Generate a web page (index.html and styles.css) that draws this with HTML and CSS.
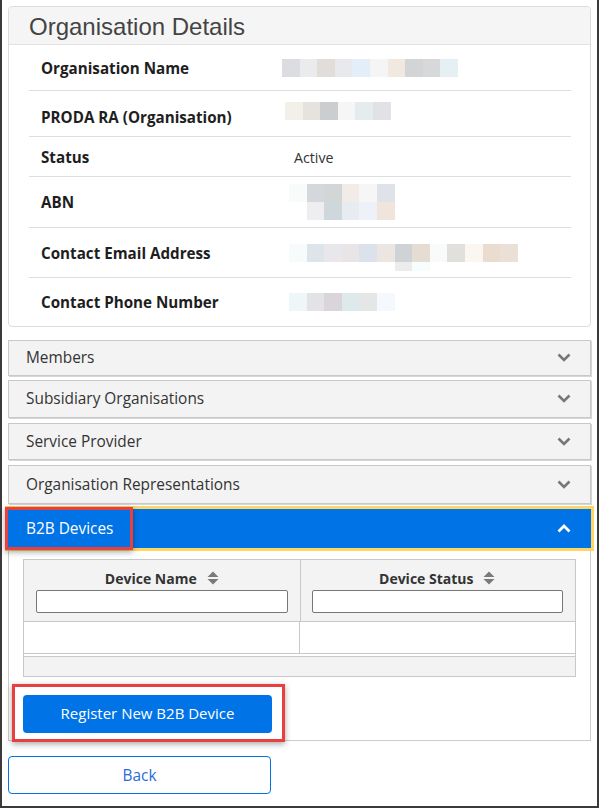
FILE: index.html
```html
<!DOCTYPE html>
<html>
<head>
<meta charset="utf-8">
<link rel="stylesheet" href="styles.css">
</head>
<body>
<div class="frame">
  <section class="card">
    <div class="card-head"><h1>Organisation Details</h1></div>
    <div class="rows">
      <div class="row r1">
        <div class="label">Organisation Name</div>
        <div class="value"><div class="blur">
          <div class="line"><i style="background:#dcdde1"></i><i style="background:#eaebed"></i><i style="background:#e1ddd9"></i><i style="background:#e8e9ed"></i><i style="background:#e4eef8"></i><i style="background:#f5f5f5"></i><i style="background:#f1e8df"></i><i style="background:#d3d4d6"></i><i style="background:#d7d8d9"></i><i style="background:#e5f0f5"></i></div>
        </div></div>
      </div>
      <div class="row r2">
        <div class="label low">PRODA RA (Organisation)</div>
        <div class="value"><div class="blur off3 up">
          <div class="line"><i style="background:#f3f0ea"></i><i style="background:#e6e3de"></i><i style="background:#cccdce"></i><i style="background:#f6f6f6"></i><i style="background:#e5eced"></i><i style="background:#e1e2e5"></i></div>
        </div></div>
      </div>
      <div class="row r3">
        <div class="label">Status</div>
        <div class="value"><span class="text">Active</span></div>
      </div>
      <div class="row r4">
        <div class="label">ABN</div>
        <div class="value"><div class="blur off7">
          <div class="line"><i style="background:#f9fbfa"></i><i style="background:#d4d8dd"></i><i style="background:#d2d6d6"></i><i style="background:#f2ece8"></i><i style="background:#f5f6f5"></i><i style="background:#dfe3e9"></i></div>
          <div class="line"><i style="background:transparent"></i><i style="background:#eeeef0"></i><i style="background:#ced8dc"></i><i style="background:#e7ecf0"></i><i style="background:#eef2f8"></i><i style="background:#efe5dc"></i></div>
        </div></div>
      </div>
      <div class="row r5">
        <div class="label">Contact Email Address</div>
        <div class="value"><div class="blur off7 down">
          <div class="line"><i style="background:#f7fbfb"></i><i style="background:#dde4ea"></i><i style="background:#e8e7ec"></i><i style="background:#e9e5e7"></i><i style="background:#dbe2eb"></i><i style="background:#ebe6e1"></i><i style="background:#cfd3d6"></i><i style="background:#e6ddd2"></i><i style="background:#f8fbfa"></i><i style="background:#e1e0dd"></i><i style="background:#fbf6f0"></i><i style="background:#ebdcd0"></i><i style="background:#eae0d6"></i></div>
          <div class="line half"><i style="background:transparent"></i><i style="background:transparent"></i><i style="background:transparent"></i><i style="background:transparent"></i><i style="background:transparent"></i><i style="background:transparent"></i><i style="background:#ececec"></i><i style="background:#f7fcfd"></i></div>
        </div></div>
      </div>
      <div class="row r6">
        <div class="label">Contact Phone Number</div>
        <div class="value"><div class="blur off7">
          <div class="line"><i style="background:#eef6f9"></i><i style="background:#e3e3e5"></i><i style="background:#d9d5da"></i><i style="background:#dde9ea"></i><i style="background:#e5e7e6"></i><i style="background:#f5f9fd"></i></div>
        </div></div>
      </div>
    </div>
  </section>

  <div class="acc a1"><span>Members</span><svg class="chev" width="14" height="9" viewBox="0 0 14 9"><polyline points="1.5,1.5 7,7 12.5,1.5" fill="none" stroke="#777" stroke-width="2.6"/></svg></div>
  <div class="acc a2"><span>Subsidiary Organisations</span><svg class="chev" width="14" height="9" viewBox="0 0 14 9"><polyline points="1.5,1.5 7,7 12.5,1.5" fill="none" stroke="#777" stroke-width="2.6"/></svg></div>
  <div class="acc a3"><span>Service Provider</span><svg class="chev" width="14" height="9" viewBox="0 0 14 9"><polyline points="1.5,1.5 7,7 12.5,1.5" fill="none" stroke="#777" stroke-width="2.6"/></svg></div>
  <div class="acc a4"><span>Organisation Representations</span><svg class="chev" width="14" height="9" viewBox="0 0 14 9"><polyline points="1.5,1.5 7,7 12.5,1.5" fill="none" stroke="#777" stroke-width="2.6"/></svg></div>
  <div class="acc open"><span>B2B Devices</span><svg class="chev" width="14" height="9" viewBox="0 0 14 9"><polyline points="1.5,7.5 7,2 12.5,7.5" fill="none" stroke="#fff" stroke-width="2.8"/></svg><div class="mark mark-head"></div></div>

  <div class="panel">
    <div class="table">
      <div class="thead">
        <div class="th"><div class="th-title">Device Name <svg class="sort" width="12" height="15" viewBox="0 0 12 15"><polygon points="6,0.5 11.5,6 0.5,6" fill="#7a7a7a"/><polygon points="0.5,8 11.5,8 6,13.5" fill="#7a7a7a"/></svg></div><input class="filter" type="text"></div>
        <div class="th"><div class="th-title">Device Status <svg class="sort" width="12" height="15" viewBox="0 0 12 15"><polygon points="6,0.5 11.5,6 0.5,6" fill="#7a7a7a"/><polygon points="0.5,8 11.5,8 6,13.5" fill="#7a7a7a"/></svg></div><input class="filter" type="text"></div>
      </div>
      <div class="tbody">
        <div class="td"></div>
        <div class="td"></div>
      </div>
      <div class="tfoot"></div>
    </div>
    <div class="btn-wrap">
      <button class="btn-primary">Register New B2B Device</button>
      <div class="mark mark-btn"></div>
    </div>
  </div>

  <button class="btn-back">Back</button>
</div>
</body>
</html>
```
FILE: styles.css
```css
html, body {
  margin: 0;
  padding: 0;
  background: #fff;
}
.frame {
  position: relative;
  width: 599px;
  height: 808px;
  box-sizing: border-box;
  border: 2px solid #3a3a3a;
  border-top: 0;
  padding: 6px 6px 0 6px;
  font-family: "Open Sans", "Noto Sans", sans-serif;
  color: #222;
}
.card {
  border: 1px solid #dcdcdc;
  border-radius: 4px;
  background: #fff;
}
.card-head {
  height: 38px;
  background: #f5f5f5;
  border-bottom: 1px solid #e2e2e2;
  border-radius: 4px 4px 0 0;
  box-sizing: border-box;
  padding-left: 20px;
}
.card-head h1 {
  margin: 0;
  font-family: "Liberation Sans", Arial, sans-serif;
  font-weight: normal;
  font-size: 24px;
  line-height: 40px;
  color: #444;
}
.rows {
  margin: 0 19px 0 20px;
}
.row {
  display: flex;
  align-items: center;
  border-bottom: 1px solid #dedede;
  box-sizing: border-box;
}
.row:last-child { border-bottom: 0; }
.r1 { height: 46px; }
.r2 { height: 46px; }
.r3 { height: 40px; }
.r4 { height: 51px; }
.r5 { height: 50px; }
.r6 { height: 48px; }
.label {
  width: 253px;
  box-sizing: border-box;
  padding-left: 12px;
  font-weight: 700;
  font-size: 15.2px;
  color: #1e1e1e;
}
.label.low { padding-top: 7px; }
.value {
  flex: 1;
  font-size: 14.2px;
  color: #333;
}
.value .text {
  padding-left: 12px;
  position: relative;
  top: 1px;
}
.blur { display: flex; flex-direction: column; }
.blur.off3 { margin-left: 3px; }
.blur.off7 { margin-left: 7px; }
.blur.up { margin-top: -5px; }
.blur.down { margin-top: 9px; }
.line { display: flex; }
.line i {
  display: block;
  width: 17.6px;
  height: 18px;
}
.line.half i { height: 9px; }

.acc {
  position: relative;
  display: flex;
  align-items: center;
  justify-content: space-between;
  box-sizing: border-box;
  background: #f3f3f3;
  border: 1px solid #c8c8c8;
  box-shadow: 1px 1px 0 #d6d6d6;
  padding: 0 19px 1px 17px;
  font-size: 15.4px;
  color: #333;
}
.a1 { margin-top: 13px; height: 36px; }
.a2 { margin-top: 4px; height: 38px; }
.a3 { margin-top: 5px; height: 37px; }
.a4 { margin-top: 5px; height: 39px; }
.acc.open {
  margin-top: 5px;
  height: 39px;
  background: #0073e6;
  border: 0;
  box-shadow: none;
  outline: 3px solid #fdd663;
  color: #fff;
  padding: 0 20px 0 18px;
}
.chev { display: block; }
.mark {
  position: absolute;
  border: 3px solid #e8403e;
  box-shadow: 0 2px 6px rgba(0,0,0,0.35);
  box-sizing: border-box;
}
.mark-head {
  left: -3px;
  top: -2px;
  width: 128px;
  height: 43px;
}

.panel {
  margin-top: 3px;
  border: 1px solid #cccccc;
  border-top: 0;
  padding: 8px 14px 7px 14px;
}
.table {
  border: 1px solid #c8c8c8;
}
.thead {
  display: flex;
  background: #f3f3f3;
  border-bottom: 1px solid #c8c8c8;
}
.th {
  flex: 1;
  height: 61px;
  box-sizing: border-box;
  padding: 7px 12px 0 12px;
}
.th + .th { border-left: 1px solid #c8c8c8; padding-left: 11px; }
.th-title {
  display: flex;
  align-items: center;
  justify-content: center;
  gap: 10px;
  font-weight: 700;
  font-size: 14px;
  color: #333;
  height: 22px;
}
.sort { display: block; }
.filter {
  display: block;
  width: 100%;
  height: 23px;
  box-sizing: border-box;
  margin: 1px 0 0 0;
  border: 1px solid #777;
  border-radius: 2px;
  background: #fff;
  padding: 0;
}
.tbody {
  display: flex;
  height: 31px;
  border-bottom: 1px solid #c8c8c8;
}
.td { flex: 1; }
.td + .td { border-left: 1px solid #c8c8c8; }
.tfoot {
  margin-top: 2px;
  height: 19px;
  background: #f3f3f3;
  border-top: 1px solid #c8c8c8;
}
.btn-wrap {
  position: relative;
  margin-top: 18px;
  width: 249px;
}
.btn-primary {
  display: block;
  width: 249px;
  height: 38px;
  border: 0;
  border-radius: 4px;
  background: #0073e6;
  color: #fff;
  font-family: "Open Sans", "Noto Sans", sans-serif;
  font-size: 15px;
  padding: 0 0 2px 0;
}
.mark-btn {
  left: -11px;
  top: -11px;
  width: 273px;
  height: 58px;
}
.btn-back {
  display: block;
  margin-top: 15px;
  width: 263px;
  height: 38px;
  background: #fff;
  border: 1px solid #0073e6;
  border-radius: 4px;
  color: #2a6ad9;
  font-family: "Open Sans", "Noto Sans", sans-serif;
  font-size: 15.4px;
  padding: 0;
}
```
